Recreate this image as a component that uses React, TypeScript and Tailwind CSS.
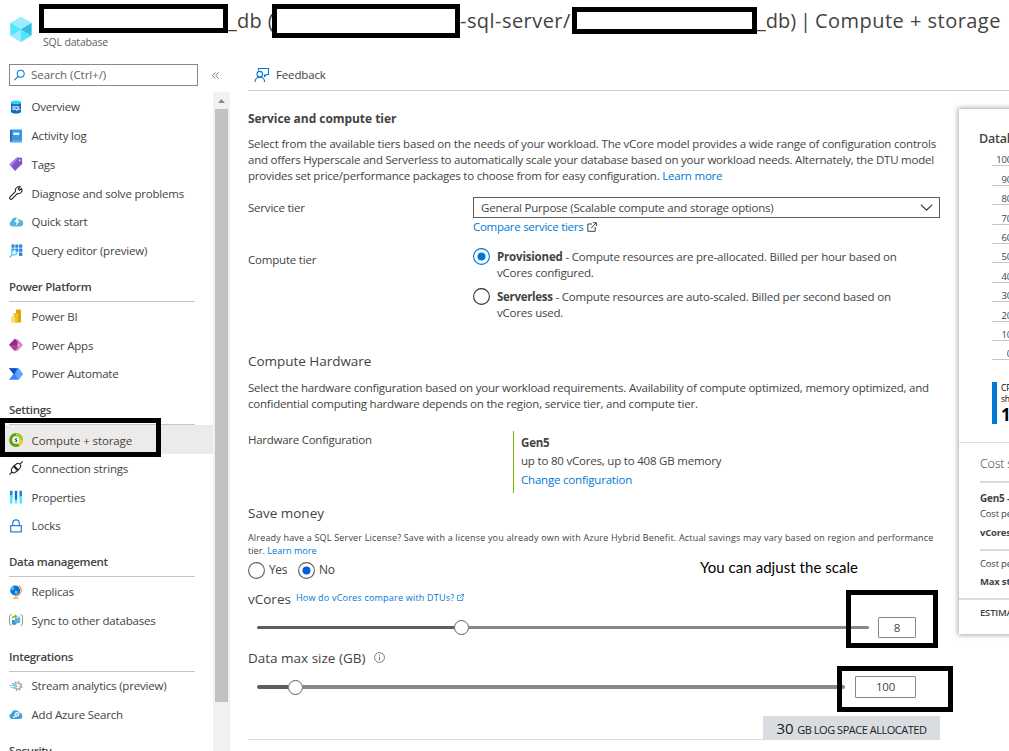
import type { ReactNode } from 'react';

const svg = 'block h-[14px] w-[14px] shrink-0 overflow-visible';

function SqlDb() {
  return (
    <svg viewBox="0 0 14 14" className={svg}>
      <path d="M2 2.5v9.2c0 1.1 2.2 1.9 5 1.9s5-.8 5-1.9V2.5z" fill="#0f6cbd" />
      <ellipse cx="7" cy="2.4" rx="5" ry="1.8" fill="#32d4f5" />
      <text x="7" y="9.8" textAnchor="middle" fontSize="4.6" fontWeight="700" fill="#fff">SQL</text>
    </svg>
  );
}
function LogBook() {
  return (
    <svg viewBox="0 0 14 14" className={svg}>
      <rect x="1.2" y=".6" width="11.800" height="12.800" rx=".8" fill="#3a96e0" />
      <path d="M1.200 1h1.500v12H1.200z" fill="#1b66ac" />
      <rect x="4.300" y="3.600" width="6" height="2.400" fill="#e8f5ff" />
      <path d="M2.800 12.200h9.600" stroke="#8fc7f2" strokeWidth=".8" />
    </svg>
  );
}
function Tag() {
  return (
    <svg viewBox="0 0 14 14" className={svg}>
      <path d="M.5 7.600 7.500.7 12 .5l1 1 .3 5.200-7.300 7.300z" fill="#8052c9" />
      <path d="M.5 7.600 7.500.7l2 .1-7.200 8.600z" fill="#a67de3" />
      <circle cx="10.700" cy="3.200" r="1" fill="#e6d6ff" />
    </svg>
  );
}
function Wrench() {
  return (
    <svg viewBox="0 0 14 14" className={svg} fill="none" stroke="#222" strokeWidth="1.1" strokeLinejoin="round">
      <path d="M12.6 2.4 10.6 4.4 9.2 3 11.4.9C9.400.1 6.500 1.200 6.300 4.200L6.400 5.600.900 11.100C-.100 12.300 1.600 14 2.900 13.100L8.300 7.600C11.200 8.400 14.200 5.600 12.600 2.400z" />
    </svg>
  );
}
function CloudBolt() {
  return (
    <svg viewBox="0 0 14 14" className={svg}>
      <path d="M3 11.5A2.900 2.900 0 0 1 2.400 6 4.300 4.300 0 0 1 10.500 4.800 3.300 3.300 0 0 1 11.300 11.500z" fill="#59b4d9" />
      <path d="M8.200 2.500 5.500 7h2.200l-1 4 4-5.200H8.500l1.400-3.300z" fill="#fff" />
    </svg>
  );
}
function GridSearch() {
  return (
    <svg viewBox="0 0 14 14" className={svg}>
      <path d="M2.500.5h3v3.200h-3zM6.300.5h3v3.200h-3zM10.100.5h3.200v3.200h-3.200zM6.300 4.400h3v3.300h-3zM10.100 4.400h3.200v3.300h-3.200zM10.100 8.400h3.200v3.500h-3.200zM2.500 4.400h3v3.300h-3z" fill="#2f80e0" />
      <circle cx="5.200" cy="8.500" r="2.700" fill="#d9f3ff" stroke="#42bfee" />
      <path d="M3.300 10.500.5 13.400" stroke="#42bfee" strokeWidth="1.300" />
    </svg>
  );
}
function PowerBi() {
  return (
    <svg viewBox="0 0 14 14" className={svg}>
      <rect x="7" y=".5" width="5" height="13" rx=".6" fill="#dda30e" />
      <rect x="4.500" y="4" width="4.500" height="9.500" rx=".5" fill="#efc12d" />
      <rect x="2" y="7.500" width="4" height="6" rx=".5" fill="#f8df69" />
    </svg>
  );
}
function PowerApps() {
  return (
    <svg viewBox="0 0 14 14" className={svg}>
      <path d="M8 .8 14 7 8 13.200 3 7z" fill="#d984bf" />
      <path d="M6 .8 10.500 7 6 13.200 0 7z" fill="#a93d98" />
      <path d="M6 .8 10.500 7H0z" fill="#8c2c82" />
      <path d="M8.500 4.500 11 7l-2.500 2.500z" fill="#ebb3d9" />
    </svg>
  );
}
function PowerAutomate() {
  return (
    <svg viewBox="0 0 14 14" className={svg}>
      <path d="M0 1.200h9.500L14 7l-4.500 5.800H0L4.500 7z" fill="#3b86f7" />
      <path d="M0 1.200h8.200L5 7.500z" fill="#174eb6" />
      <path d="m9.500 1.200 4.500 5.800-4.500 5.800L6 7z" fill="#6cb0ff" opacity=".75" />
    </svg>
  );
}
function Compute() {
  return (
    <svg viewBox="0 0 14 14" className={svg}>
      <circle cx="7" cy="7" r="5.300" fill="#fff" stroke="#57a51c" strokeWidth="3.200" />
      <path d="M7 1.700A5.300 5.300 0 0 1 12.300 7" fill="none" stroke="#a4cf2b" strokeWidth="3.200" />
      <path d="M12.300 7A5.300 5.300 0 0 1 9.600 11.600" fill="none" stroke="#fcd116" strokeWidth="3.200" />
      <text x="7" y="9" textAnchor="middle" fontSize="5.500" fontWeight="700" fill="#333">$</text>
    </svg>
  );
}
function Plug() {
  return (
    <svg viewBox="0 0 14 14" className={svg} fill="none" stroke="#222" strokeWidth="1.100">
      <path d="M5.200 4.700 8 2.500c1.700-1 4.700 1.400 3.500 3.800L9.300 9zM4.400 5.400 8.600 9.700 6 11.500c-2.200 1.200-4.600-1.200-3.500-3.500zM11.300 2.900 13.700.4M2.700 11.300.4 13.600M6 8l1.300-1.300M7.200 9 8.600 7.500" />
    </svg>
  );
}
function Bars() {
  return (
    <svg viewBox="0 0 14 14" className={svg}>
      <path d="M1 .8h2.500v7H1zM10.500.8H13v7h-2.500z" fill="#198ab3" />
      <path d="M1 5h2.500v8.500H1zM10.500 6H13v7.500h-2.500zM5.800 10h2.400v3.500H5.800z" fill="#50e6ff" />
      <path d="M5.800.8h2.400v9H5.800z" fill="#0078d4" />
    </svg>
  );
}
function Lock() {
  return (
    <svg viewBox="0 0 14 14" className={svg} fill="none" stroke="#2a7de1" strokeWidth="1.200">
      <path d="M1.700 6.600h10.600v6.300H1.700zM3.700 6.500V4.300c0-4.500 6.600-4.500 6.600 0v2.200" />
    </svg>
  );
}
function Globe() {
  return (
    <svg viewBox="0 0 14 14" className={svg}>
      <path d="M10 .8c4 3 2.500 9.700-3 10M6.800 10.500v2.600M4 13.200h5.600" fill="none" stroke="#f6a04d" strokeWidth="1.200" />
      <circle cx="6.200" cy="5.500" r="5" fill="#1471cf" />
      <path d="M3 1.800c2 0 3 1 2 2.200L3.500 5.500 2 4zM6 5.500l3 1-1.300 3.200-2-1.500z" fill="#50c5f0" />
    </svg>
  );
}
function Sync() {
  return (
    <svg viewBox="0 0 14 14" className={svg}>
      <path d="M2.500 1.200C0 2 .5 5 .5 7s-.5 5 2 5.800M11.500 1.200c2.500.8 2 3.800 2 5.800s.5 5-2 5.800" fill="none" stroke="#8b8b8b" />
      <path d="M3 7v4c.5 1.200 4 1.200 4.500 0V7z" fill="#2d9fd1" />
      <path d="M6 4v5.500c1 1.200 4.500 1.200 5.300-.5V4z" fill="#59b4d9" />
      <path d="M6 4c0-1.600 5.300-1.600 5.300 0S6 5.600 6 4z" fill="#b5e3f5" />
      <path d="M2.500 6C3 3 4.500 2.500 6 2.500V1.300L8.300 3.300 6 5.300V4.200C4.800 4.200 3.800 5 2.500 6z" fill="#7fba00" />
    </svg>
  );
}
function Gear() {
  return (
    <svg viewBox="0 0 14 14" className={svg}>
      <circle cx="8.500" cy="7" r="4.200" fill="none" stroke="#a5a5a5" strokeWidth="1.600" strokeDasharray="1.650 1.650" />
      <circle cx="8.500" cy="7" r="3" fill="#fff" stroke="#a5a5a5" strokeWidth="1.200" />
      <path d="M0 6.500h5l3 .5M1.500 8.500h5L8.500 7M3 4.500h2L8 6.500" fill="none" stroke="#7fd0ef" strokeWidth="1.200" />
    </svg>
  );
}
function CloudSearch() {
  return (
    <svg viewBox="0 0 14 14" className={svg}>
      <path d="M3 11A2.800 2.800 0 0 1 2.400 5.500 4.300 4.300 0 0 1 10.500 4.800 3.200 3.200 0 0 1 11.300 11z" fill="#42a5d1" />
      <circle cx="8" cy="6.300" r="1.900" fill="#8bd0ea" stroke="#fff" />
      <path d="M6.600 7.700 4.300 9.700" stroke="#fff" strokeWidth="1.200" />
    </svg>
  );
}

function Item({ icon, label, active }: { icon: ReactNode; label: string; active?: boolean }) {
  return (
    <div className={active ? 'flex h-[28.8px] items-center gap-[8.5px] bg-[#edebe9] pl-[9px] pt-px tracking-[-0.1px]' : 'flex h-[28.8px] items-center gap-[8.5px] pl-[9px]'}>
      {icon}
      <span>{label}</span>
    </div>
  );
}

function Group({ label }: { label: string }) {
  return (
    <div className="ml-[9px] mr-[18px] flex h-[36.800px] items-end border-b border-[#c8c6c4] pb-[6px] font-semibold leading-[16px] tracking-[-0.31px]">
      {label}
    </div>
  );
}

function External({ className }: { className: string }) {
  return (
    <svg viewBox="0 0 10 10" className={className} fill="none" stroke="currentColor">
      <path d="M5 2H.8v7.300h7.400V5M6 .7h3.400V4M9.200.8 4.200 6" />
    </svg>
  );
}

function Radio({ checked, ring, dot }: { checked?: boolean; ring: string; dot?: string }) {
  return (
    <svg viewBox="0 0 17 17" className="block h-[17px] w-[17px] shrink-0">
      <circle cx="8.500" cy="8.500" r="7.900" fill="#fff" stroke={ring} strokeWidth="1.100" />
      {checked && <circle cx="8.500" cy="8.500" r="4" fill={dot} />}
    </svg>
  );
}

function Slider({ done, rest }: { done: string; rest: string }) {
  return (
    <div className="flex items-center">
      <div className={`rounded-l-full bg-[#605e5c] ${done}`} />
      <div className="h-[15px] w-[15px] shrink-0 rounded-full border border-[#605e5c] bg-white" />
      <div className={`rounded-r-full bg-[#8a8886] ${rest}`} />
    </div>
  );
}

const ticks = ['100', '90', '80', '70', '60', '50', '40', '30', '20', '10', '0'];

export default function App() {
  return (
    <div className="relative flex h-[751px] w-[1009px] flex-col overflow-hidden whitespace-nowrap bg-white font-['Open_Sans',sans-serif] text-[11.5px] tracking-[-0.2px] text-[#444341]">
      <header className="flex h-[60px] shrink-0">
        <svg viewBox="0 0 22 25" className="ml-[10px] mt-[17px] h-[25px] w-[22px] shrink-0">
          <path d="M11 0 21.500 6v12.500L11 25 .5 18.500V6z" fill="#50e6ff" />
          <path d="M11 0 21.500 6 11 12.500.5 6z" fill="#9cebff" />
          <path d="m11 12.500 10.500-6.500v12.500z" fill="#32bedd" />
          <path d="M11 12.500 .5 18.500 11 25z" fill="#9cebff" />
          <path d="M.5 6 11 12.500.5 18.500z" fill="#50e6ff" />
        </svg>
        <div className="ml-[7px] mt-[4px] w-[189px] shrink-0">
          <div className="h-[29px] border-[5px] border-black bg-white" />
          <div className="pl-[4px] pt-[2px] text-[10.5px] leading-[15px] tracking-[-0.17px] text-[#605e5c]">SQL database</div>
        </div>
        <div className="mt-[7px] w-[44px] shrink-0 overflow-hidden text-[20px] font-medium leading-[28px] tracking-[0.3px]">_db (</div>
        <div className="mt-[4px] h-[34px] w-[188px] shrink-0 border-[5px] border-black bg-white" />
        <div className="mt-[7px] w-[112px] shrink-0 text-[20px] font-medium leading-[28px] tracking-[0.450px]">-sql-server/</div>
        <div className="mt-[7px] h-[27px] w-[185px] shrink-0 border-[5px] border-black bg-white" />
        <div className="mt-[7px] flex text-[20px] leading-[28px]">
          <span className="w-[43px] font-medium tracking-[0px]">_db)</span>
          <span className="w-[15px]">|</span>
          <span className="tracking-[0.470px]">Compute + storage</span>
        </div>
      </header>

      <div className="flex h-[691px]">
        <nav className="w-[213px] shrink-0">
          <div className="flex h-[32.500px] items-start pt-[4px]">
            <div className="ml-[9px] flex h-[22px] w-[189px] shrink-0 items-center gap-[6px] border border-[#8a8886] pl-[4px] text-[#605e5c]">
              <svg viewBox="0 0 12 12" className="h-[12px] w-[11px]" fill="none" stroke="#0078d4" strokeWidth="1.100">
                <circle cx="7.300" cy="4.600" r="3.800" />
                <path d="M4.500 7.400.5 11.500" />
              </svg>
              <span className="tracking-[-0.05px]">Search (Ctrl+/)</span>
            </div>
            <svg viewBox="0 0 7 7" className="ml-[14px] mt-[8px] h-[7px] w-[7px] shrink-0" fill="none" stroke="#605e5c" strokeWidth=".8">
              <path d="M3.300.3.500 3.500l2.800 3.200M6.600.3 3.800 3.500l2.800 3.200" />
            </svg>
          </div>
          <Item icon={<SqlDb />} label="Overview" />
          <Item icon={<LogBook />} label="Activity log" />
          <Item icon={<Tag />} label="Tags" />
          <Item icon={<Wrench />} label="Diagnose and solve problems" />
          <Item icon={<CloudBolt />} label="Quick start" />
          <Item icon={<GridSearch />} label="Query editor (preview)" />
          <Group label="Power Platform" />
          <Item icon={<PowerBi />} label="Power BI" />
          <Item icon={<PowerApps />} label="Power Apps" />
          <Item icon={<PowerAutomate />} label="Power Automate" />
          <Group label="Settings" />
          <Item icon={<Compute />} label="Compute + storage" active />
          <Item icon={<Plug />} label="Connection strings" />
          <Item icon={<Bars />} label="Properties" />
          <Item icon={<Lock />} label="Locks" />
          <Group label="Data management" />
          <Item icon={<Globe />} label="Replicas" />
          <Item icon={<Sync />} label="Sync to other databases" />
          <Group label="Integrations" />
          <Item icon={<Gear />} label="Stream analytics (preview)" />
          <Item icon={<CloudSearch />} label="Add Azure Search" />
          <Group label="Security" />
        </nav>

        <div className="mt-[32px] flex w-[17px] shrink-0 flex-col items-center bg-[#f1f1f1]">
          <svg viewBox="0 0 7 4" className="mb-[6px] mt-[7px] h-[4px] w-[7px]">
            <path d="M0 4 3.500 0 7 4z" fill="#8a8a8a" />
          </svg>
          <div className="h-[593px] w-[13px] bg-[#c1c1c1]" />
        </div>

        <main className="ml-[18px] w-[761px] shrink-0">
          <div className="flex h-[31px] items-center border-b border-[#d2d0ce] pl-[6px]">
            <svg viewBox="0 0 16 16" className="h-[16px] w-[16px]" fill="none" stroke="#0078d4" strokeWidth="1.100">
              <circle cx="5.800" cy="7.200" r="2.800" />
              <path d="M1 15c0-6.500 9.600-6.500 9.600 0M4.500 3.500V1.500h10v6h-2l-2 2v-2" />
            </svg>
            <span className="ml-[6px] tracking-[-0.15px]">Feedback</span>
          </div>

          <div className="flex">
            <section className="w-[692px] shrink-0">
              <h2 className="mt-[20px] text-[12px] font-bold leading-[16px] tracking-[-0.05px]">Service and compute tier</h2>
              <div className="mt-[9px] leading-[16px]">
                <p className="tracking-[-0.190px]">Select from the available tiers based on the needs of your workload. The vCore model provides a wide range of configuration controls</p>
                <p className="tracking-[-0.225px]">and offers Hyperscale and Serverless to automatically scale your database based on your workload needs. Alternately, the DTU model</p>
                <p className="tracking-[-0.225px]">provides set price/performance packages to choose from for easy configuration. <a className="text-[#0078d4]">Learn more</a></p>
              </div>

              <div className="mt-[13px] flex h-[21px]">
                <span className="w-[225px] leading-[21px]">Service tier</span>
                <div className="flex w-[467px] items-center justify-between border border-[#605e5c] pl-[7px] pr-[6px]">
                  <span className="tracking-[-0.220px]">General Purpose (Scalable compute and storage options)</span>
                  <svg viewBox="0 0 13 7" className="h-[7px] w-[13px]" fill="none" stroke="#323130" strokeWidth="1.100">
                    <path d="m.8.700 5.700 5.500L12.200.7" />
                  </svg>
                </div>
              </div>
              <div className="ml-[225px] flex h-[18px] items-center gap-1">
                <a className="tracking-[-0.280px] text-[#0078d4]">Compare service tiers</a>
                <External className="h-[10px] w-[10px]" />
              </div>

              <div className="mt-[12px] flex">
                <span className="w-[225px] pt-[4px] leading-[16px]">Compute tier</span>
                <div>
                  <div className="flex gap-[7px] leading-[16px]">
                    <Radio checked ring="#0078d4" dot="#0078d4" />
                    <p className="pt-px tracking-[-0.200px]"><b className="tracking-[-0.18px]">Provisioned</b> - Compute resources are pre-allocated. Billed per hour based on<br />vCores configured.</p>
                  </div>
                  <div className="mt-[7px] flex gap-[7px] leading-[16px]">
                    <Radio ring="#323130" />
                    <p className="pt-px tracking-[-0.200px]"><b className="tracking-[-0.3px]">Serverless</b> - Compute resources are auto-scaled. Billed per second based on<br />vCores used.</p>
                  </div>
                </div>
              </div>

              <h3 className="mt-[31px] text-[13.500px] leading-[18px] tracking-[-0.03px]">Compute Hardware</h3>
              <div className="mt-[10px] leading-[16px] tracking-[-0.215px]">
                <p>Select the hardware configuration based on your workload requirements. Availability of compute optimized, memory optimized, and</p>
                <p>confidential computing hardware depends on the region, service tier, and compute tier.</p>
              </div>

              <div className="mt-[19px] flex h-[62px]">
                <span className="w-[265px] leading-[18px] tracking-[-0.260px]">Hardware Configuration</span>
                <div className="border-l border-[#7fba00] pl-[7px] pt-[3px] leading-[18.500px]">
                  <div className="font-bold">Gen5</div>
                  <div className="-mt-px mb-px">up to 80 vCores, up to 408 GB memory</div>
                  <a className="text-[#0078d4]">Change configuration</a>
                </div>
              </div>

              <h3 className="mt-[11px] text-[13.500px] leading-[18px] tracking-[0px]">Save money</h3>
              <div className="mt-[9px] text-[9px] leading-[13px] tracking-[0.180px]">
                <p>Already have a SQL Server License? Save with a license you already own with Azure Hybrid Benefit. Actual savings may vary based on region and performance</p>
                <p className="tracking-[0.060px]">tier. <a className="text-[#0078d4]">Learn more</a></p>
              </div>
              <div className="mt-[3px] flex h-[20px] items-center">
                <Radio ring="#605e5c" />
                <span className="ml-[4px] w-[29px] text-[12px] tracking-[-0.4px]">Yes</span>
                <Radio checked ring="#605e5c" dot="#015cda" />
                <span className="ml-[4px] text-[12px]">No</span>
              </div>
              <div className="mt-[10px] flex h-[18px]">
                <span className="text-[13.500px] leading-[18px] tracking-[0px]">vCores</span>
                <a className="ml-[5px] flex h-[15px] items-center gap-[3px] text-[9px] tracking-[0.210px] text-[#0078d4]">
                  How do vCores compare with DTUs?
                  <External className="h-[7px] w-[7px]" />
                </a>
              </div>
              <div className="mt-[9px] flex h-[21px] items-center pl-[9px]">
                <Slider done="h-[3px] w-[197px]" rest="h-[3px] w-[400px]" />
                <div className="ml-[9px] flex h-[21px] w-[38px] items-center justify-center rounded-[1px] border border-[#8a8886]">8</div>
              </div>
              <div className="mt-[11px] flex h-[18px] items-center">
                <span className="text-[13.500px] tracking-[0px]">Data max size (GB)</span>
                <svg viewBox="0 0 12 12" className="mb-[2px] ml-[9px] h-[11px] w-[11px]" fill="none" stroke="#605e5c" strokeWidth=".9">
                  <circle cx="6" cy="6" r="5.400" />
                  <path d="M6 5v4M6 2.800v1.200" />
                </svg>
              </div>
              <div className="mt-[9px] flex h-[22px] items-center pl-[9px]">
                <Slider done="h-[4px] w-[31px]" rest="h-[4px] w-[542px]" />
                <div className="ml-[10px] flex h-[22px] w-[61px] items-center justify-center rounded-[1px] border border-[#8a8886]">100</div>
              </div>
              <div className="mt-[18px] flex h-[24px] items-end">
                <div className="w-[515px] border-b border-[#d9dce1]" />
                <div className="flex h-[24px] w-[177px] items-baseline justify-center gap-[4px] bg-[#d9dce1] text-[#222]">
                  <span className="text-[15px] leading-[24px]">30</span>
                  <span className="text-[11px] tracking-[-0.480px]">GB LOG SPACE ALLOCATED</span>
                </div>
              </div>
            </section>

            <aside className="ml-[19px] mt-[18px] h-[525px] w-[120px] shrink-0 bg-white shadow-[0_0_5px_1px_rgba(0,0,0,0.35)]">
              <div className="pl-[20px] pt-[21px] text-[12.500px] font-semibold leading-[18px]">Database</div>
              <div className="ml-[33px] mt-[-1px]">
                {ticks.map((t) => (
                  <div key={t} className="flex h-[19.400px] w-[60px] items-end border-b border-[#c8c6c4] text-[9.500px] leading-[10px]">
                    <span className="w-[20px] text-right">{t}</span>
                  </div>
                ))}
              </div>
              <div className="ml-[33px] mt-[21.600px] flex h-[42px] border-l-[5px] border-[#0078d4] pl-[4px] text-black">
                <div className="text-[8.500px] leading-[11px]">
                  <div>CPU</div>
                  <div>share</div>
                  <div className="mt-[2px] text-[17px] font-bold leading-[18px]">100</div>
                </div>
              </div>
              <div className="mt-[18px] border-t border-[#d9dce1]" />
              <div className="ml-[21px]">
                <div className="pt-[12px] text-[12.500px] font-light leading-[18px]">Cost summary</div>
                <div className="mt-[8px] border-t-2 border-[#d9dce1]" />
                <div className="pt-[7px] text-[10px] font-bold leading-[16px]">Gen5 - General</div>
                <div className="text-[9.500px] leading-[15px]">Cost per vCore</div>
                <div className="mt-[4px] text-[9.500px] font-bold leading-[16px]">vCores selected</div>
                <div className="mt-[8px] border-t-2 border-[#d9dce1]" />
                <div className="pt-[5px] text-[9.500px] leading-[15px]">Cost per GB</div>
                <div className="mt-[3px] text-[9.500px] font-bold leading-[16px]">Max storage</div>
              </div>
              <div className="mt-[8px] border-t-2 border-[#d9dce1]" />
              <div className="pl-[21px] pt-[5px] text-[9.500px] font-semibold leading-[16px]">ESTIMATED</div>
            </aside>
          </div>
        </main>
      </div>

      <div className="absolute left-[700px] top-[557px] font-['Lato','Open_Sans',sans-serif] text-[15px] leading-[20px] tracking-[0.050px] text-black">You can adjust the scale</div>
      <div className="absolute left-0 top-[418px] h-[39px] w-[161px] border-[5px] border-black" />
      <div className="absolute left-[846px] top-[590px] h-[58px] w-[92px] border-[5px] border-black" />
      <div className="absolute left-[837px] top-[666px] h-[46px] w-[116px] border-[5px] border-black" />
    </div>
  );
}
